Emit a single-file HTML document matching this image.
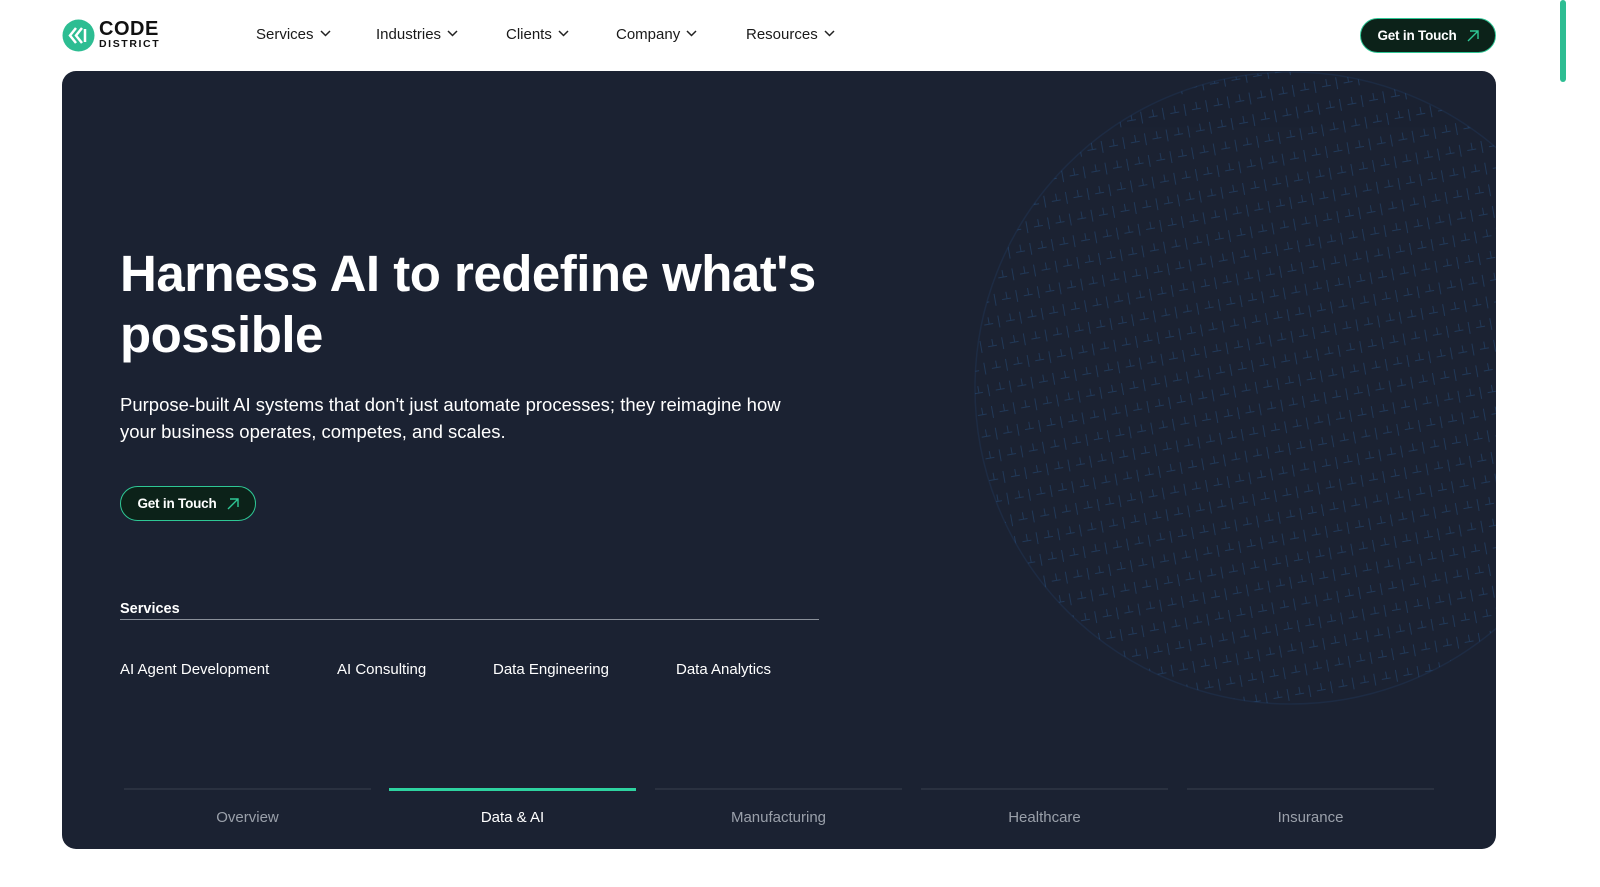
<!DOCTYPE html>
<html><head><style>
*{margin:0;padding:0;box-sizing:border-box}
body{width:1600px;height:887px;background:#fff;font-family:"Liberation Sans",sans-serif;position:relative;overflow:hidden}
.nav a{position:absolute;top:26px;font-size:15px;color:#1a1a1a}
.nav a svg{margin-left:6px;vertical-align:2px}
.btn{position:absolute;border:1.5px solid #2ec795;background:#0c2219;color:#fff;border-radius:20px;font-size:13.5px;font-weight:bold;display:flex;align-items:center;justify-content:center;gap:10px;letter-spacing:-0.2px}
.card{position:absolute;left:62px;top:71px;width:1434px;height:778px;background:#1b2232;border-radius:14px;overflow:hidden}
h1{position:absolute;left:58px;top:172px;font-size:51px;line-height:61px;color:#fff;font-weight:bold;letter-spacing:-0.5px}
.p{position:absolute;left:58px;top:320px;font-size:18.5px;line-height:27px;color:#fff;width:680px}
.svc{position:absolute;top:590px;font-size:15px;color:#fff}
.tab{position:absolute;top:717px;width:247px;height:2px;background:#2a3140}
.tl{position:absolute;top:738px;width:247px;text-align:center;font-size:15px;color:#9aa0aa}
</style></head><body>
<svg style="position:absolute;left:62px;top:19px" width="33" height="33" viewBox="0 0 33 33"><circle cx="16.5" cy="16.5" r="16" fill="#2dbd92"/><path d="M14 9 L8 16.5 L14 24 M20 9 L14 16.5 L20 24" stroke="#fff" stroke-width="2.5" fill="none"/><path d="M23 10 V23" stroke="#fff" stroke-width="2.5"/></svg>
<div style="position:absolute;left:99px;top:18px;font-size:20px;font-weight:bold;color:#111;letter-spacing:0.5px">CODE</div>
<div style="position:absolute;left:99px;top:38px;font-size:10.5px;font-weight:bold;color:#111;letter-spacing:1.6px">DISTRICT</div>
<div class="nav">
<a style="left:256px">Services<svg width="11" height="7"><path d="M1 1l4.5 4.5L10 1" stroke="#222" stroke-width="1.5" fill="none"/></svg></a>
<a style="left:376px">Industries<svg width="11" height="7"><path d="M1 1l4.5 4.5L10 1" stroke="#222" stroke-width="1.5" fill="none"/></svg></a>
<a style="left:506px">Clients<svg width="11" height="7"><path d="M1 1l4.5 4.5L10 1" stroke="#222" stroke-width="1.5" fill="none"/></svg></a>
<a style="left:616px">Company<svg width="11" height="7"><path d="M1 1l4.5 4.5L10 1" stroke="#222" stroke-width="1.5" fill="none"/></svg></a>
<a style="left:746px">Resources<svg width="11" height="7"><path d="M1 1l4.5 4.5L10 1" stroke="#222" stroke-width="1.5" fill="none"/></svg></a>
</div>
<div class="btn" style="left:1360px;top:18px;width:136px;height:35px">Get in Touch <svg width="12" height="12"><path d="M1 11L11 1M3 1h8v8" stroke="#2ec795" stroke-width="1.4" fill="none"/></svg></div>
<div style="position:absolute;left:1560px;top:0;width:6px;height:82px;background:#2dbd92;border-radius:3px"></div>
<div class="card">
<svg style="position:absolute;left:912px;top:0" width="522" height="640">
<defs><pattern id="g" width="22" height="22" patternUnits="userSpaceOnUse" patternTransform="rotate(-10)"><path d="M3 3v12M10 10h9M15 3v7" stroke="#2b5a8f" stroke-width="1" opacity="0.6"/></pattern></defs>
<circle cx="317" cy="317" r="316" fill="url(#g)"/>
<circle cx="317" cy="317" r="316" fill="#1b2232" opacity="0.3" stroke="#23406a" stroke-width="1.5"/>
</svg>
<h1>Harness AI to redefine what's<br>possible</h1>
<div class="p">Purpose-built AI systems that don't just automate processes; they reimagine how your business operates, competes, and scales.</div>
<div class="btn" style="left:58px;top:415px;width:136px;height:35px">Get in Touch <svg width="12" height="12"><path d="M1 11L11 1M3 1h8v8" stroke="#2ec795" stroke-width="1.4" fill="none"/></svg></div>
<div style="position:absolute;left:58px;top:530px;font-size:14.5px;font-weight:bold;color:#fff">Services</div>
<div style="position:absolute;left:58px;top:548px;width:699px;height:1px;background:#8a909a"></div>
<div class="svc" style="left:58px">AI Agent Development</div>
<div class="svc" style="left:275px">AI Consulting</div>
<div class="svc" style="left:431px">Data Engineering</div>
<div class="svc" style="left:614px">Data Analytics</div>
<div class="tab" style="left:62px"></div><div class="tab" style="left:327px;height:3px;background:#2ed3a0"></div><div class="tab" style="left:593px"></div><div class="tab" style="left:859px"></div><div class="tab" style="left:1125px"></div>
<div class="tl" style="left:62px">Overview</div><div class="tl" style="left:327px;color:#fff">Data &amp; AI</div><div class="tl" style="left:593px">Manufacturing</div><div class="tl" style="left:859px">Healthcare</div><div class="tl" style="left:1125px">Insurance</div>
</div>
</body></html>
